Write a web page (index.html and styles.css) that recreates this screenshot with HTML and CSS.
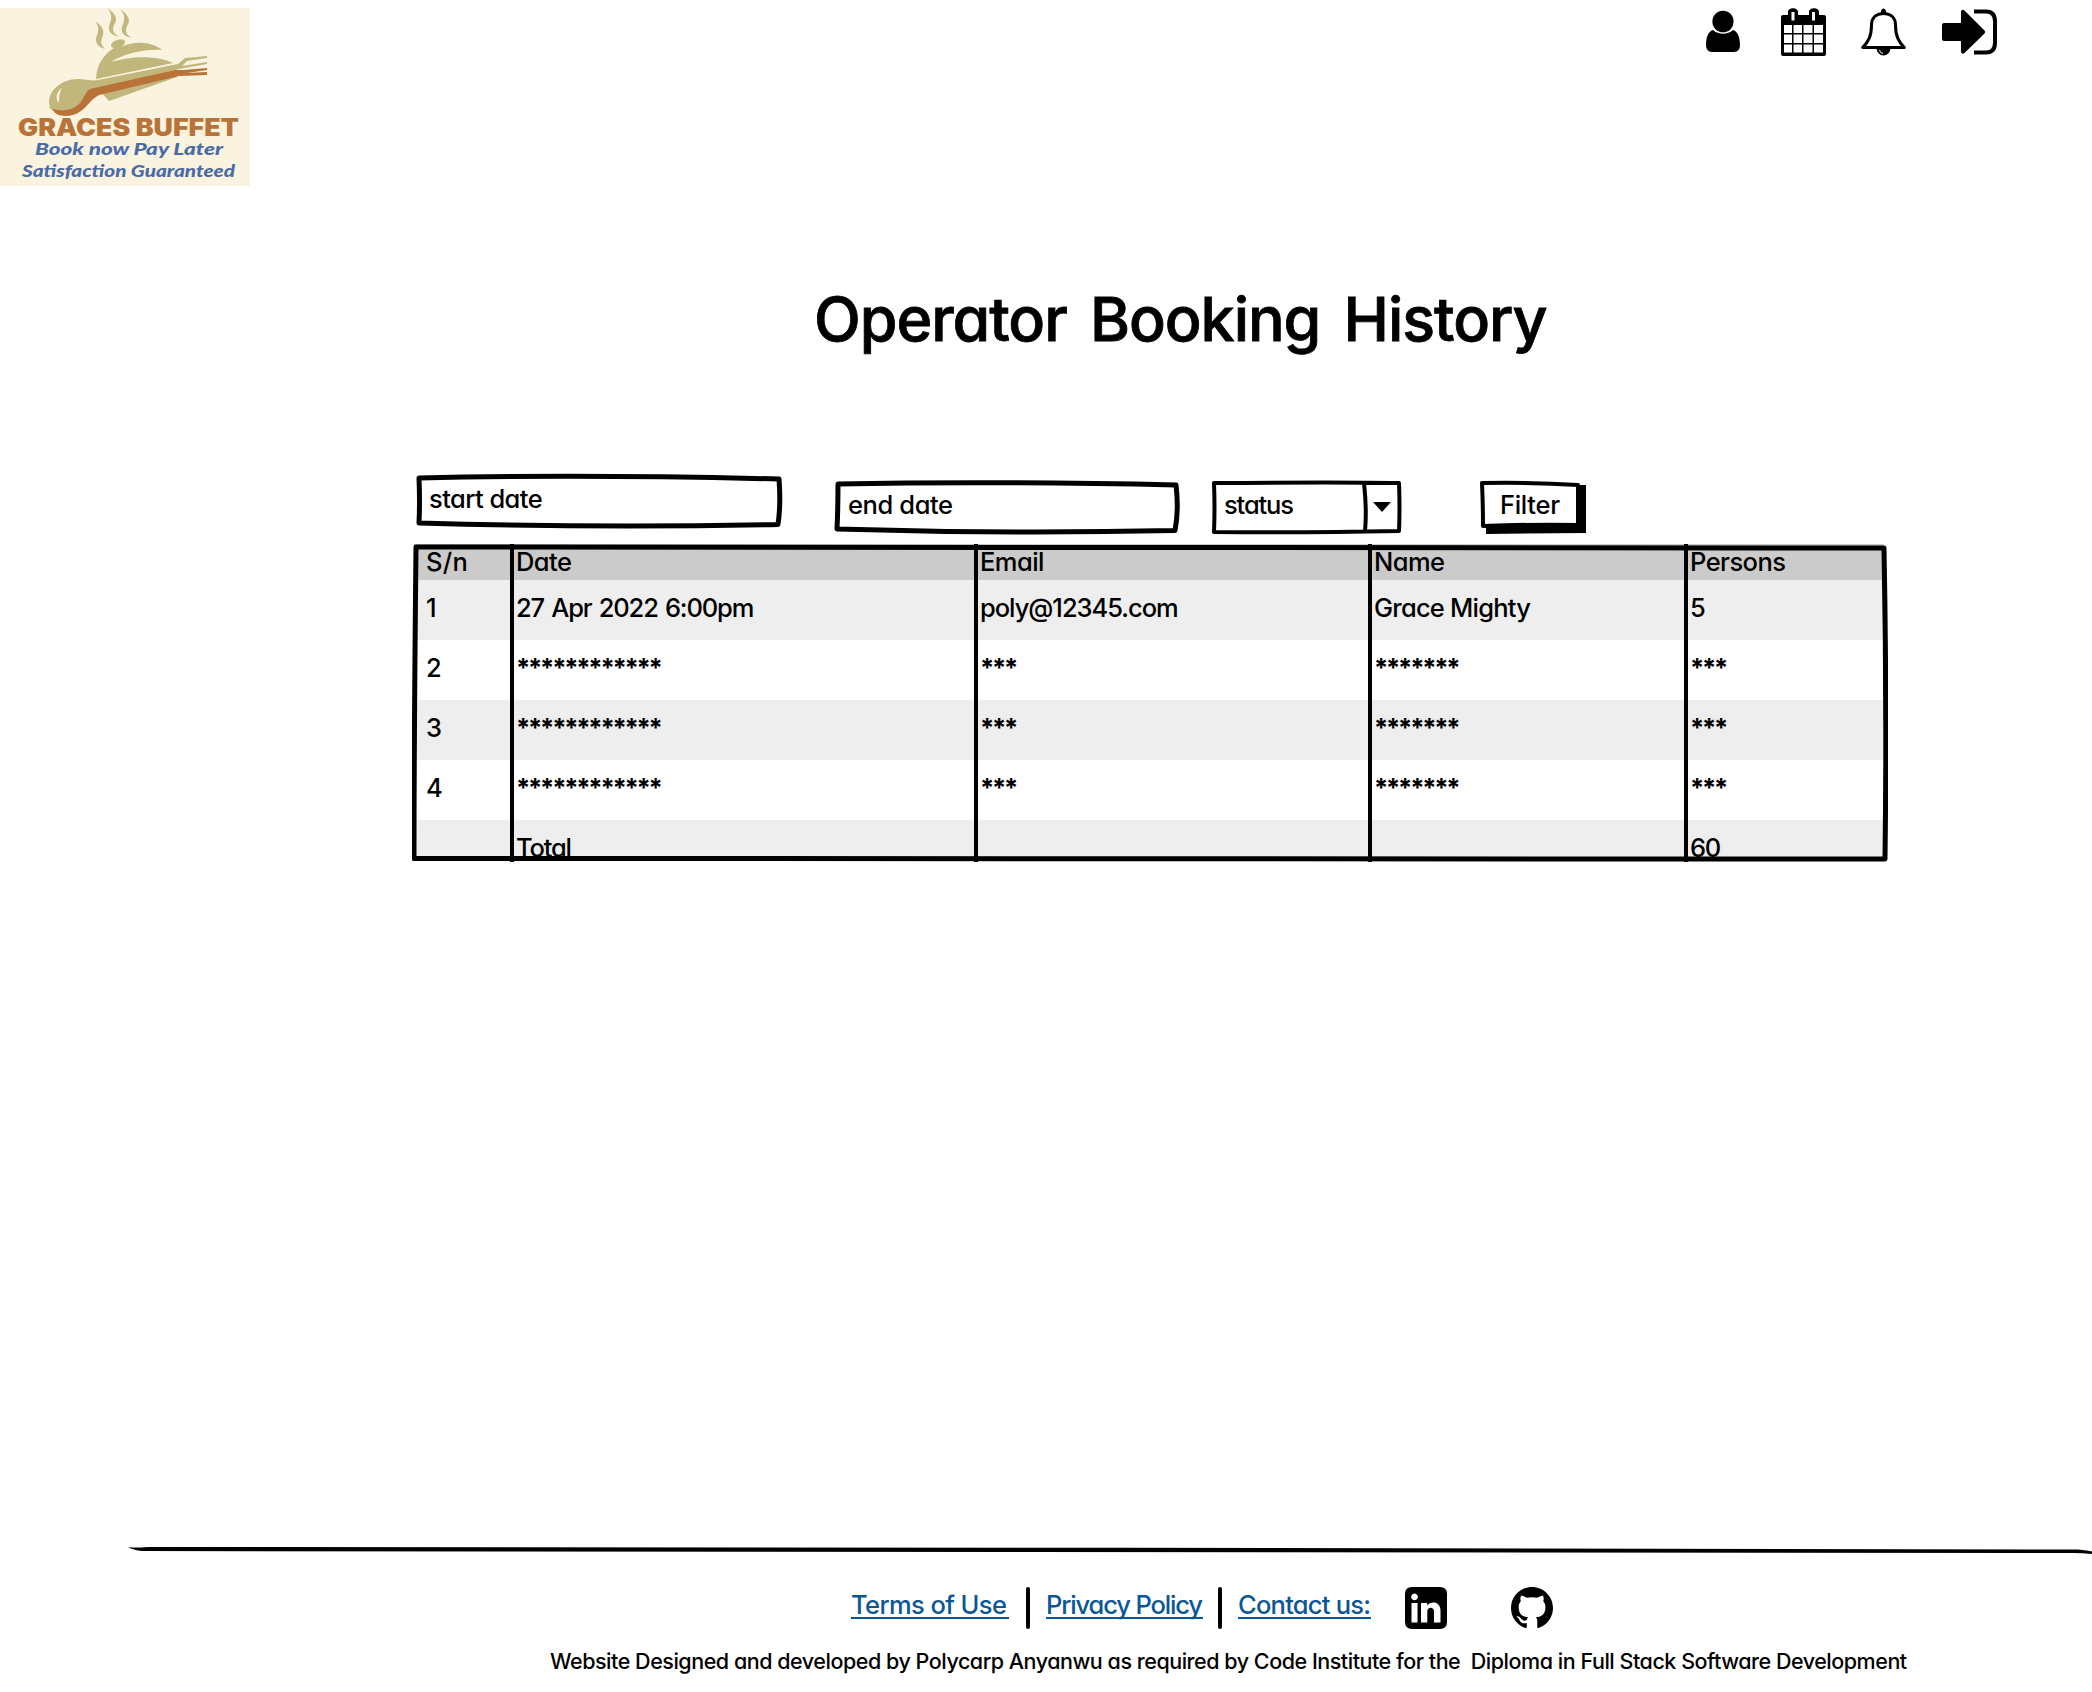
FILE: index.html
```html
<!DOCTYPE html>
<html lang="en">
<head>
<meta charset="utf-8">
<title>Operator Booking History</title>
<link rel="stylesheet" href="styles.css">
</head>
<body>
<header class="topbar">
  <svg class="logo" viewBox="0 0 250 178" role="img" aria-label="Graces Buffet">
    <rect width="250" height="178" fill="#f9f3e0"/>
    <g fill="#c1b67b">
      <path d="M95 13c8 5 10 11 7 17-2 5 0 8 3 11-7-2-11-7-8-14 2-5 2-9-2-14z"/>
      <path d="M107 0c9 6 11 11 7 17-2 5-1 8 5 12-9-2-12-7-9-14 2-5 2-10-3-15z"/>
      <path d="M120 1c9 6 11 12 7 17-2 5-1 9 5 12-10-2-12-7-9-14 2-5 2-10-3-15z"/>
      <path d="M111 37c1-5 12-7 14-4 0 3-2 5-4 6 18-8 34-3 41 3-18-1-39 4-51 12 22-7 48-6 62 1L96 71c1-17 9-25 18-31-2 0-3-1-3-3z"/>
      <path d="M101 84 178 65 177 69 109 93z"/>
      <path d="M50 99c-5-15 12-29 30-28 9 1 13 2 18 1l80-16 7-6 22-2v2l-20 3-5 5 25-4v2l-28 5-82 20c-10 11-12 19-28 23-8 1-17 0-20-5z"/>
    </g>
    <path d="M53 101c10 3 20 1 26-5 5-5 6-12 11-15l85-19 8 0 24-2v2l-20 3 20-1v3l-28 1-80 19c-10 5-14 17-26 20-9 2-17 1-20-5z" fill="#b97338"/>
    <path d="M62 80c-6 4-7 11-3 15 0-5 0-10 3-15z" fill="#f9f3e0"/>
    <text class="logo-name" x="18" y="128" textLength="221" lengthAdjust="spacingAndGlyphs">GRACES BUFFET</text>
    <text class="logo-tag" x="35" y="147" textLength="188" lengthAdjust="spacingAndGlyphs">Book now Pay Later</text>
    <text class="logo-tag" x="22" y="169" textLength="213" lengthAdjust="spacingAndGlyphs">Satisfaction Guaranteed</text>
  </svg>
  <nav class="actions">
    <svg class="i-user" viewBox="0 0 36 48"><ellipse cx="18" cy="13.5" rx="10.6" ry="10.8"/><path d="M8 22c5.500 5 14.500 5 20 0 5 1.500 7 8 7 15 0 4-2 7-6 7H7c-4 0-6-3-6-7 0-7 2-13.500 7-15z"/></svg>
    <svg class="i-cal" viewBox="0 0 45 48"><path fill-rule="evenodd" d="M2 7h5V4c0-5 10-5 10 0v3h11V4c0-5 10-5 10 0v3h5q2 0 2 2v37q0 2-2 2H2q-2 0-2-2V9q0-2 2-2zM10.500 4v8.500h3V4zM31 4v8.500h3V4zM3 17v8h8v-8zM12.500 17v8h8.500v-8zM22.500 17v8h9v-8zM33 17v8h9v-8zM3 26.500v8.500h8v-8.500zM12.500 26.500v8.500h8.500v-8.500zM22.500 26.500v8.500h9v-8.500zM33 26.500v8.500h9v-8.500zM3 36.500v8h8v-8zM12.500 36.500v8h8.500v-8zM22.500 36.500v8h9v-8zM33 36.500v8h9v-8z"/></svg>
    <svg class="i-bell" viewBox="0 0 45 48"><path d="M22.500 5.500C15 5.500 10.500 10 10.500 17c0 11-3 16.500-8.800 22.500h41.600C37.500 33.500 34.500 28 34.500 17c0-7-4.500-11.500-12-11.500z" fill="none" stroke="#000" stroke-width="3" stroke-linejoin="round"/><path d="M20 5V2.500q2.500-4 5 0V5zM15.500 40a7 7.500 0 0 0 14 0z"/><path d="M18.500 42q.5 3 3.500 3.500" fill="none" stroke="#fff"/></svg>
    <svg class="i-in" viewBox="0 0 56 48"><path d="M2 15h17V3.500q1-3 3.500-1L42.500 22.500q1.500 1.500 0 3L22.500 45q-2.500 2-3.500-1V33H2q-2 0-2-2V17q0-2 2-2z"/><path d="M32 3.500h12q9 0 9 10v21q0 10-9 10H32" fill="none" stroke="#000" stroke-width="4"/></svg>
  </nav>
</header>

<main class="content">
  <h1 class="title">Operator Booking History</h1>
  <form class="filters">
    <div class="field start">
      <svg class="sketch" viewBox="0 0 366 54"><path d="M3 4Q160 0 363 5Q365 30 362 50.500Q180 54 3 49Q4 28 3 4z"/></svg>
      <span>start date</span>
    </div>
    <div class="field end">
      <svg class="sketch" viewBox="0 0 346 54"><path d="M4 4Q160 1 342 5Q345 30 341 50.500Q170 54 3 49Q4 28 4 4z"/></svg>
      <span>end date</span>
    </div>
    <div class="field status">
      <svg class="sketch thin" viewBox="0 0 190 54"><path d="M2 3Q130 2 187 3Q188 28 187 51Q90 53 2 52Q3 28 2 3zM152 3Q155 30 153 51"/><path class="arrow" d="M161 22h18l-9 10z"/></svg>
      <span>status</span>
    </div>
    <div class="field button">
      <svg class="sketch thin" viewBox="0 0 106 54"><path class="shadow" d="M6 40H96V5H106V53L6 54z"/><path d="M2 3Q50 2 98 5L98 45Q60 44 3 46Q3 25 2 3z"/></svg>
      <span>Filter</span>
    </div>
  </form>

  <div class="grid">
    <div class="row head"><span class="t-sn">S/n</span><span>Date</span><span>Email</span><span>Name</span><span>Persons</span></div>
    <div class="row"><span>1</span><span class="t-when">27 Apr 2022 6:00pm</span><span class="t-mail">poly@12345.com</span><span class="t-name">Grace Mighty</span><span>5</span></div>
    <div class="row"><span>2</span><span class="stars">************</span><span class="stars">***</span><span class="stars">*******</span><span class="stars">***</span></div>
    <div class="row"><span>3</span><span class="stars">************</span><span class="stars">***</span><span class="stars">*******</span><span class="stars">***</span></div>
    <div class="row"><span>4</span><span class="stars">************</span><span class="stars">***</span><span class="stars">*******</span><span class="stars">***</span></div>
    <div class="row total"><span></span><span>Total</span><span></span><span></span><span>60</span></div>
    <svg class="frame" viewBox="0 0 1476 318"><path d="M4 3Q700 1 1472 4Q1475 160 1473 315Q700 317 2 314.500Q2 200 4 3z"/><path class="cols" d="M100 0V318M564 0V318M958 0V318M1274 0V318"/></svg>
  </div>
</main>

<footer class="footer">
  <svg class="rule" viewBox="0 0 1964 8"><path d="M0 0Q6 1 20 0L1000 .8 1950 2.500Q1960 3.500 1964 4.500V7Q1955 6 1945 6L900 5 14 4Q5 3 0 0z"/></svg>
  <div class="links">
    <a class="l1">Terms of Use</a><i class="bar"></i><a class="l2">Privacy Policy</a><i class="bar near"></i><a class="l3">Contact us:</a>
    <svg class="i-li" viewBox="0 0 42 42"><path fill-rule="evenodd" d="M7 0h28q7 0 7 7v28q0 7-7 7H7q-7 0-7-7V7q0-7 7-7zM6.500 16v19.500h6V16zM9.500 6.500a3.400 3.400 0 1 0 .01 0zM16 16v19.500h6.300V24.500c0-5 6.700-5 6.700 0v11h6.500V23.500c0-9-10-10-13.200-4.700V16z"/></svg>
    <svg class="i-gh" viewBox="0 0 16 16"><path d="M8 0C3.580 0 0 3.580 0 8c0 3.540 2.290 6.530 5.470 7.590.4.070.55-.17.55-.38 0-.19-.01-.82-.01-1.490-2.010.37-2.530-.49-2.690-.94-.09-.23-.48-.94-.82-1.130-.28-.15-.68-.52-.01-.53.63-.01 1.080.58 1.230.82.72 1.210 1.870.87 2.330.66.070-.52.28-.87.51-1.070-1.780-.2-3.640-.89-3.640-3.950 0-.87.31-1.590.82-2.150-.08-.2-.36-1.020.08-2.120 0 0 .67-.21 2.200.82.64-.18 1.320-.27 2-.27s1.360.09 2 .27c1.530-1.040 2.200-.82 2.200-.82.44 1.100.16 1.920.08 2.120.51.56.82 1.270.82 2.150 0 3.070-1.870 3.750-3.650 3.950.29.25.54.73.54 1.480 0 1.070-.01 1.930-.01 2.200 0 .21.15.46.55.38A8.010 8.010 0 0 0 16 8c0-4.420-3.580-8-8-8z"/></svg>
  </div>
  <p class="credit">Website Designed and developed by Polycarp Anyanwu as required by Code Institute for the&nbsp; Diploma in Full Stack Software Development</p>
</footer>
</body>
</html>
```
FILE: styles.css
```css
* { box-sizing: border-box; }
body {
  margin: 0;
  width: 2092px;
  height: 1692px;
  display: flex;
  flex-direction: column;
  overflow: hidden;
  background: #fff;
  color: #000;
  font: 500 25.5px/56px Inter, "Open Sans", sans-serif;
  font-feature-settings: "cv11", "ss03";
  white-space: nowrap;
}
svg { display: block; flex: none; }

.topbar { display: flex; justify-content: space-between; align-items: flex-start; padding: 8px 94px 0 0; height: 186px; }
.logo { width: 250px; height: 178px; }
.logo-name { font: 900 24px Inter, sans-serif; fill: #b97338; }
.logo-tag { font: italic 900 17.5px Lato, sans-serif; fill: #4a6ba5; }
.actions { display: flex; }
.actions svg { height: 48px; }
.i-user { width: 36px; margin-right: 39.500px; }
.i-cal { width: 45px; margin-right: 35.500px; }
.i-bell { width: 45px; margin-right: 36px; }
.i-in { width: 56px; }

.content { margin-left: 412px; width: 1476px; }
.title { margin: 98px 0 0 402px; font-size: 61px; font-weight: 500; line-height: 70px; height: 80px; letter-spacing: -1.040px; word-spacing: 8px; -webkit-text-stroke: .8px #000; }
.filters { display: flex; height: 80px; margin-top: 110px; padding-left: 4px; }
.field { position: relative; height: 54px; padding-left: 13px; line-height: 49px; }
.field span { position: relative; }
.start { width: 366px; letter-spacing: -.55px; }
.end { width: 346px; margin: 6px 0 0 52px; padding-left: 14px; letter-spacing: -.4px; }
.status { width: 190px; margin: 6px 0 0 32px; padding-left: 12px; letter-spacing: -1.140px; }
.button { width: 106px; margin: 6px 0 0 78px; padding-left: 20px; letter-spacing: -.3px; }
.sketch { position: absolute; inset: 0; width: 100%; height: 100%; overflow: visible; fill: #fff; stroke: #000; stroke-width: 5; stroke-linejoin: round; }
.thin { stroke-width: 4; }
.arrow, .shadow { fill: #000; stroke: none; }

.grid { position: relative; height: 318px; margin-top: -10px; overflow: hidden; }
.row { display: grid; grid-template-columns: 102px 464px 394px 316px 1fr; height: 60px; margin: 0 4px 0 2px; }
.row span:first-child { padding-left: 12px; }
.row:nth-child(even) { background: #eee; }
.row.head { height: 36px; line-height: 36px; letter-spacing: -.55px; background: #cbcbcb; }
.row.head .t-sn { letter-spacing: .3px; }
.t-when { letter-spacing: -1.130px; word-spacing: 1.500px; }
.t-mail { letter-spacing: -1.030px; }
.t-name { letter-spacing: -.77px; }
.row.total { height: 40px; letter-spacing: -1.2px; background: #eee; }
.stars { letter-spacing: -2.2px; font-weight: 700; }
.frame { position: absolute; inset: 0; width: 1476px; height: 318px; fill: none; stroke: #000; stroke-width: 5; stroke-linejoin: round; }
.cols { stroke-width: 4; }

.footer { margin-top: auto; height: 145px; }
.rule { width: 1964px; height: 8px; margin-left: 128px; }
.links { display: flex; height: 42px; margin: 32px 0 0 851px; }
.links a { color: #0b5697; height: 32px; line-height: 36px; border-bottom: 2px solid #0b5697; }
.l1 { width: 158px; letter-spacing: -.6px; }
.l2 { width: 157px; letter-spacing: -1.150px; }
.l3 { width: 133px; letter-spacing: -.76px; }
.bar { width: 4px; height: 42px; margin: 0 16px 0 17px; border-radius: 2px; background: #000; }
.bar.near { margin-left: 15px; }
.i-li { width: 42px; height: 42px; margin-left: 34px; }
.i-gh { width: 42px; height: 42px; margin-left: 64px; }
.credit { margin: 15px 0 0 550px; font-size: 21.5px; line-height: 34px; letter-spacing: -.47px; }
```
